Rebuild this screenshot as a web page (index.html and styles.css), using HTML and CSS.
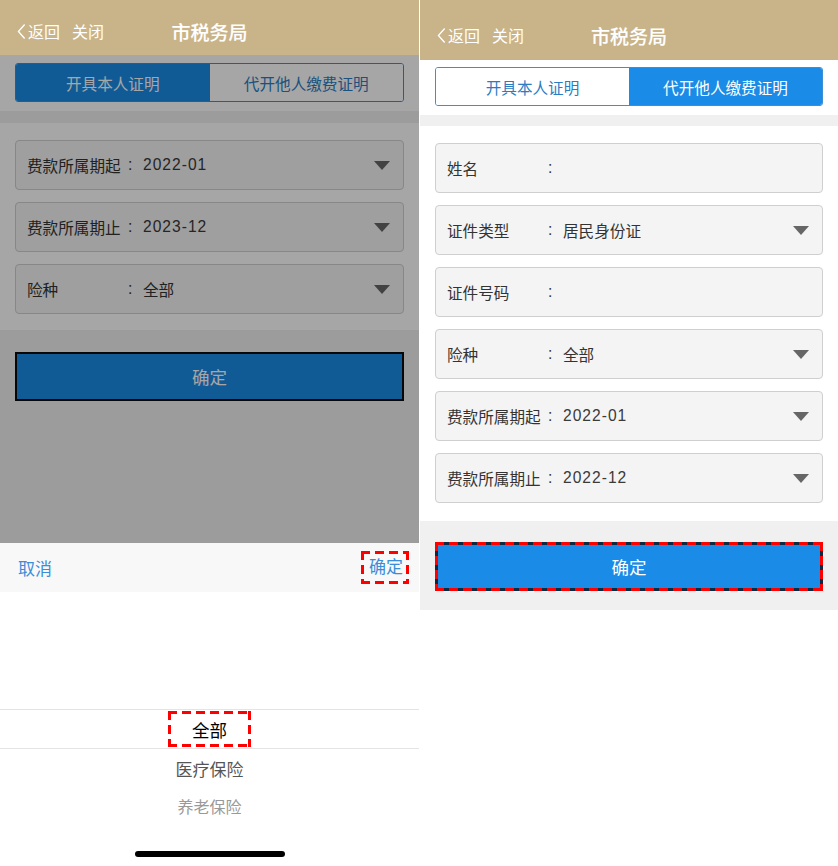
FILE: index.html
```html
<!DOCTYPE html>
<html lang="zh-CN">
<head>
<meta charset="utf-8">
<title>市税务局</title>
<link rel="stylesheet" href="styles.css">
</head>
<body>
<div class="screens">
  <section class="phone phone-left">
    <header class="nav nav-short">
      <div class="nav-actions">
        <span class="back"><svg class="chev" viewBox="0 0 10 18"><path d="M8.5 1.2 1.6 9l6.9 7.8"/></svg>返回</span>
        <span class="close">关闭</span>
      </div>
      <h1 class="nav-title">市税务局</h1>
      <div></div>
    </header>
    <div class="webview">
      <div class="tabs-wrap tabs-wrap-short">
        <div class="tabs">
          <div class="tab tab-active">开具本人证明</div>
          <div class="tab">代开他人缴费证明</div>
        </div>
      </div>
      <div class="band band-12"></div>
      <div class="form form-short">
        <div class="row"><span class="label">费款所属期起</span><span class="colon">:</span><span class="value num">2022-01</span><svg class="caret" viewBox="0 0 16 9"><path d="M0 0h16L8 9z"/></svg></div>
        <div class="row"><span class="label">费款所属期止</span><span class="colon">:</span><span class="value num">2023-12</span><svg class="caret" viewBox="0 0 16 9"><path d="M0 0h16L8 9z"/></svg></div>
        <div class="row"><span class="label">险种</span><span class="colon">:</span><span class="value">全部</span><svg class="caret" viewBox="0 0 16 9"><path d="M0 0h16L8 9z"/></svg></div>
      </div>
      <div class="actions actions-fill">
        <div class="btn btn-dark-edge">确定</div>
      </div>
      <div class="dim"></div>
    </div>
    <div class="picker">
      <div class="picker-bar">
        <span class="bar-btn">取消</span>
        <span class="bar-btn mark-box dashed">确定</span>
      </div>
      <div class="wheel">
        <div class="wheel-selected"><span class="selected-box dashed">全部</span></div>
        <div class="wheel-option">医疗保险</div>
        <div class="wheel-option wheel-option-far">养老保险</div>
        <div class="home-indicator"></div>
      </div>
    </div>
  </section>

  <div class="divider"></div>

  <section class="phone phone-right">
    <header class="nav nav-tall">
      <div class="nav-actions">
        <span class="back"><svg class="chev" viewBox="0 0 10 18"><path d="M8.5 1.2 1.6 9l6.9 7.8"/></svg>返回</span>
        <span class="close">关闭</span>
      </div>
      <h1 class="nav-title">市税务局</h1>
      <div></div>
    </header>
    <div class="tabs-wrap tabs-wrap-tall">
      <div class="tabs">
        <div class="tab">开具本人证明</div>
        <div class="tab tab-active">代开他人缴费证明</div>
      </div>
    </div>
    <div class="band band-11"></div>
    <div class="form form-tall">
      <div class="row"><span class="label">姓名</span><span class="colon">:</span><span class="value"></span></div>
      <div class="row"><span class="label">证件类型</span><span class="colon">:</span><span class="value">居民身份证</span><svg class="caret" viewBox="0 0 16 9"><path d="M0 0h16L8 9z"/></svg></div>
      <div class="row"><span class="label">证件号码</span><span class="colon">:</span><span class="value"></span></div>
      <div class="row"><span class="label">险种</span><span class="colon">:</span><span class="value">全部</span><svg class="caret" viewBox="0 0 16 9"><path d="M0 0h16L8 9z"/></svg></div>
      <div class="row"><span class="label">费款所属期起</span><span class="colon">:</span><span class="value num">2022-01</span><svg class="caret" viewBox="0 0 16 9"><path d="M0 0h16L8 9z"/></svg></div>
      <div class="row"><span class="label">费款所属期止</span><span class="colon">:</span><span class="value num">2022-12</span><svg class="caret" viewBox="0 0 16 9"><path d="M0 0h16L8 9z"/></svg></div>
    </div>
    <div class="actions actions-fixed">
      <div class="btn btn-marked">确定</div>
    </div>
  </section>
</div>
</body>
</html>
```

FILE: styles.css
```css
* {
  box-sizing: border-box;
  margin: 0;
  padding: 0;
}

html,
body {
  width: 838px;
  height: 866px;
  background: #fff;
  overflow: hidden;
}

body {
  font-family: "Liberation Sans", "Noto Sans CJK SC", sans-serif;
  color: #333;
}

.screens {
  display: flex;
  height: 866px;
}

.phone {
  display: flex;
  flex-direction: column;
  height: 866px;
  background: #fff;
}

.phone-left {
  width: 419px;
}

.phone-right {
  width: 418px;
}

.divider {
  width: 1px;
  background: #fff;
}

/* navigation bar */
.nav {
  display: grid;
  grid-template-columns: 1fr auto 1fr;
  align-items: center;
  background: #c9b388;
  color: #fff;
  flex: none;
}

.nav-short {
  height: 55px;
  padding-top: 7px;
}

.nav-tall {
  height: 60px;
  padding-top: 10px;
}

.nav-actions {
  display: flex;
  align-items: center;
  padding-left: 17px;
  font-size: 16px;
  gap: 12px;
}

.back {
  display: flex;
  align-items: center;
  gap: 2px;
}

.chev {
  width: 9px;
  height: 17px;
  fill: none;
  stroke: #fff;
  stroke-width: 1.5;
}

.nav-title {
  font-family: "Noto Sans CJK SC Medium", "Noto Sans CJK SC", sans-serif;
  font-size: 19px;
  font-weight: 400;
  -webkit-text-stroke: 0.15px #fff;
}

/* tabs */
.tabs-wrap {
  background: #fff;
  padding-left: 15px;
  padding-right: 15px;
  flex: none;
}

.tabs-wrap-short {
  padding-top: 8px;
  padding-bottom: 9px;
}

.tabs-wrap-tall {
  padding-top: 7px;
  padding-bottom: 9px;
}

.tabs {
  display: grid;
  grid-template-columns: 1fr 1fr;
  height: 39px;
  border: 1px solid #3b8fd8;
  border-radius: 3px;
  overflow: hidden;
}

.tab {
  display: flex;
  align-items: center;
  justify-content: center;
  font-size: 15.6px;
  color: #2b7dc3;
  background: #fff;
}

.tab-active {
  background: #1a8be6;
  color: #fff;
}

.band {
  background: #f0f0f0;
  flex: none;
}

.band-12 {
  height: 12px;
}

.band-11 {
  height: 11px;
}

/* form */
.form {
  display: flex;
  flex-direction: column;
  gap: 12px;
  padding-left: 15px;
  padding-right: 15px;
  background: #fff;
  flex: none;
}

.form-short {
  padding-top: 17px;
  padding-bottom: 16px;
}

.form-tall {
  padding-top: 17px;
  padding-bottom: 18px;
}

.row {
  display: flex;
  align-items: center;
  height: 50px;
  padding: 0 13px 0 11px;
  background: #f4f4f4;
  border: 1px solid #cfcfcf;
  border-radius: 4px;
  font-size: 15.6px;
  color: #333;
}

.label {
  width: 101px;
  flex: none;
  white-space: nowrap;
}

.colon {
  width: 15px;
  flex: none;
}

.value {
  flex: 1;
}

.num {
  letter-spacing: 1px;
  color: #3a3a3a;
}

.caret {
  width: 16px;
  height: 9px;
  fill: #666;
  flex: none;
}

/* actions */
.actions {
  background: #f0f0f0;
  padding-left: 15px;
  padding-right: 15px;
}

.actions-fill {
  flex: 1;
  padding-top: 22px;
}

.actions-fixed {
  flex: none;
  padding-top: 21px;
  padding-bottom: 19px;
}

.btn {
  height: 49px;
  display: flex;
  align-items: center;
  justify-content: center;
  font-size: 17.5px;
  color: #fff;
  background: #1a8be6;
}

.btn-dark-edge {
  border: 2px solid #0c0c0c;
}

/* long red dashes used to mark elements */
.dashed {
  border: 3px solid transparent;
  background:
    repeating-linear-gradient(90deg, #f00 0 9px, transparent 9px 14px) left top / 100% 3px no-repeat border-box,
    repeating-linear-gradient(90deg, #f00 0 9px, transparent 9px 14px) left bottom / 100% 3px no-repeat border-box,
    repeating-linear-gradient(180deg, #f00 0 9px, transparent 9px 14px) left top / 3px 100% no-repeat border-box,
    repeating-linear-gradient(180deg, #f00 0 9px, transparent 9px 14px) right top / 3px 100% no-repeat border-box;
}

.btn-marked {
  border: 3px solid transparent;
  background:
    repeating-linear-gradient(90deg, #f00 0 9px, transparent 9px 14px) left top / 100% 3px no-repeat border-box,
    repeating-linear-gradient(90deg, #f00 0 9px, transparent 9px 14px) left bottom / 100% 3px no-repeat border-box,
    repeating-linear-gradient(180deg, #f00 0 9px, transparent 9px 14px) left top / 3px 100% no-repeat border-box,
    repeating-linear-gradient(180deg, #f00 0 9px, transparent 9px 14px) right top / 3px 100% no-repeat border-box,
    linear-gradient(#1a8be6, #1a8be6) padding-box,
    #10283f border-box;
}

/* dimming layer of the modal picker */
.webview {
  position: relative;
  flex: 1;
  display: flex;
  flex-direction: column;
  overflow: hidden;
}

.dim {
  position: absolute;
  inset: 0;
  background: rgba(0, 0, 0, 0.35);
}

/* picker sheet */
.picker {
  height: 323px;
  flex: none;
  display: flex;
  flex-direction: column;
}

.picker-bar {
  height: 49px;
  flex: none;
  display: flex;
  align-items: center;
  justify-content: space-between;
  padding: 0 10px 0 18px;
  background: #f8f8f8;
}

.bar-btn {
  font-size: 17px;
  color: #3a8dd8;
}

.mark-box {
  padding: 1px 3px 1px 5px;
  line-height: 25px;
}

.wheel {
  flex: 1;
  display: flex;
  flex-direction: column;
  padding-top: 117px;
  background: #fff;
}

.wheel-selected {
  height: 40px;
  display: flex;
  align-items: center;
  justify-content: center;
  border-top: 1px solid #e4e4e4;
  border-bottom: 1px solid #e4e4e4;
}

.selected-box {
  width: 83px;
  height: 36px;
  display: flex;
  align-items: center;
  justify-content: center;
  font-size: 17.5px;
  color: #000;
}

.wheel-option {
  height: 38px;
  display: flex;
  align-items: center;
  justify-content: center;
  font-size: 17px;
  color: #555;
}

.wheel-option-far {
  font-size: 16px;
  color: #999;
}

.home-indicator {
  margin-top: auto;
  margin-bottom: 9px;
  align-self: center;
  width: 150px;
  height: 6px;
  border-radius: 3px;
  background: #000;
}
```
